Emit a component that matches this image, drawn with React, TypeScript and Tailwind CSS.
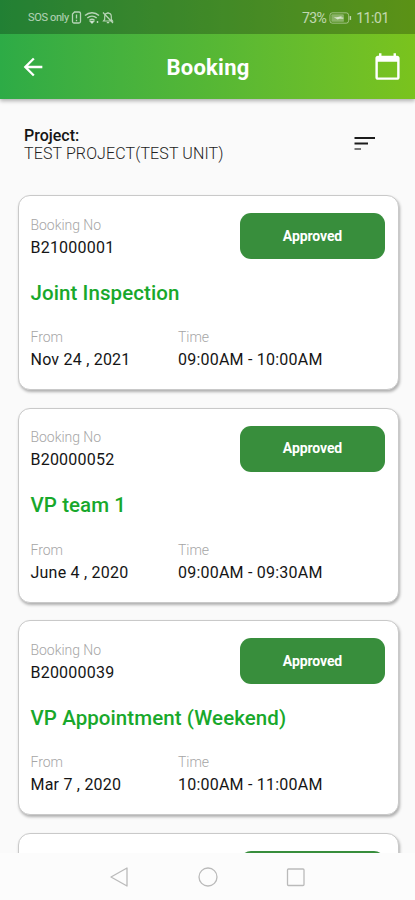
type Booking = {
  id: string;
  title: string;
  date: string;
  time: string;
};

const bookings: Booking[] = [
  { id: "B21000001", title: "Joint Inspection", date: "Nov 24 , 2021", time: "09:00AM - 10:00AM" },
  { id: "B20000052", title: "VP team 1", date: "June 4 , 2020", time: "09:00AM - 09:30AM" },
  { id: "B20000039", title: "VP Appointment (Weekend)", date: "Mar 7 , 2020", time: "10:00AM - 11:00AM" },
];

export default function App() {
  return (
    <div className="flex h-[900px] w-[415px] flex-col overflow-hidden bg-[#fafafa] font-['Roboto',sans-serif] text-[#151515]">
      <header className="relative z-10 shrink-0 bg-linear-to-r from-[#2dab46] via-[#55b735] to-[#7ac31d] text-white shadow-[0_2px_4px_rgba(0,0,0,0.3)]">
        <StatusBar />
        <div className="flex h-[65px] items-center justify-between pr-[13px] pl-[19px]">
          <button type="button" aria-label="Back" className="w-[24px]">
            <svg width="28" height="28" viewBox="0 0 24 24" fill="currentColor">
              <path d="M20 11H7.83l5.59-5.59L12 4l-8 8 8 8 1.41-1.41L7.83 13H20v-2z" />
            </svg>
          </button>
          <h1 className="pt-[2px] text-[22px] leading-none font-bold tracking-[0.25px]">Booking</h1>
          <button type="button" aria-label="Calendar">
            <svg width="29" height="29" viewBox="0 0 24 24" fill="currentColor">
              <path d="M20 3h-1V1h-2v2H7V1H5v2H4c-1.1 0-2 .9-2 2v16c0 1.1.9 2 2 2h16c1.1 0 2-.9 2-2V5c0-1.1-.9-2-2-2zm0 18H4V8h16v13z" />
            </svg>
          </button>
        </div>
      </header>

      <main className="min-h-0 flex-1 overflow-hidden">
        <div className="flex h-[96px] items-start justify-between pt-[27px] pr-[39px] pl-[24px]">
          <div className="text-[16px] leading-[18px]">
            <p className="pt-px font-medium">Project:</p>
            <p className="font-light tracking-[0.12px] text-[#222]">TEST PROJECT(TEST UNIT)</p>
          </div>
          <svg width="22" height="16" viewBox="0 0 22 16" className="mt-[10px]">
            <path d="M0.500 1h20.500v2H0.500z" fill="#1c1c1c" />
            <path d="M0.500 6.500h13.500v2H0.500z" fill="#1c1c1c" />
            <path d="M0.500 12h6.500v2H0.500z" fill="#777" />
          </svg>
        </div>
        <div className="flex flex-col gap-[17.5px] pr-[16px] pl-[18px]">
          {bookings.map((b) => (
            <BookingCard key={b.id} booking={b} />
          ))}
          <article className="h-[195px] shrink-0 rounded-[12px] border border-[#c9c9c9] bg-white pt-[17px] pr-[13px] shadow-[1px_2px_3px_rgba(0,0,0,0.3)]">
            <div className="ml-auto h-[46px] w-[145px] rounded-[11px] bg-[#388e3c]" />
          </article>
        </div>
      </main>

      <NavBar />
    </div>
  );
}

function StatusBar() {
  return (
    <div className="flex h-[34px] items-center justify-between bg-black/25 pr-[26px] pl-[28px] text-white/65">
      <div className="flex items-center gap-[2px]">
        <span className="text-[11px] leading-none tracking-[-0.35px]">SOS only</span>
        <svg width="11" height="13" viewBox="0 0 11 13" fill="none" stroke="currentColor" strokeWidth="1.3">
          <path d="M3.5 1H8a1.5 1.5 0 0 1 1.5 1.5v8A1.5 1.5 0 0 1 8 12H3a1.5 1.5 0 0 1-1.5-1.5V3z" />
          <path d="M5.5 3.5v4M5.5 8.8v1.4" />
        </svg>
        <svg width="16" height="13" viewBox="0 0 16 13" fill="none" stroke="currentColor" strokeWidth="1.4">
          <path d="M1 4.5c4-3.7 10-3.7 14 0M3.3 7c2.8-2.5 6.6-2.5 9.4 0M5.5 9.3c1.5-1.3 3.5-1.3 5 0" />
          <path d="M6.5 10.5h3L8 12z" fill="currentColor" />
          <path d="M13.5 10v2" />
        </svg>
        <svg width="12" height="13" viewBox="0 0 12 13" fill="none" stroke="currentColor" strokeWidth="1.2">
          <path d="M1.5 10h9L9.3 8.3V5.5a3.3 3.3 0 0 0-6.6 0v2.8zM4.8 11.7h2.4M6 1v1.2M1 1.5l10 10.5" />
        </svg>
      </div>
      <div className="flex items-center gap-[3px] pt-px">
        <span className="text-[14px] leading-none tracking-[-0.6px]">73%</span>
        <svg width="23" height="12" viewBox="0 0 24 12">
          <rect x="1" y="0.6" width="19.5" height="10.8" rx="2.5" fill="none" stroke="currentColor" opacity="0.7" />
          <rect x="2.5" y="2" width="13" height="8" rx="1" fill="currentColor" opacity="0.5" />
          <path d="M5 5.2h3l5-1v1.3h2v1.3h-4l-2 .8z" fill="currentColor" />
          <path d="M22.3 4v4" stroke="currentColor" strokeWidth="1.5" />
        </svg>
        <span className="ml-px text-[14px] leading-none tracking-[-0.4px]">11:01</span>
      </div>
    </div>
  );
}

function BookingCard({ booking }: { booking: Booking }) {
  return (
    <article className="h-[195px] shrink-0 rounded-[12px] border border-[#c9c9c9] bg-white pt-[17px] pr-[13px] pl-[11.5px] shadow-[1px_2px_3px_rgba(0,0,0,0.3)]">
      <div className="flex items-start justify-between">
        <Field label="Booking No" value={booking.id} />
        <span className="flex h-[46px] w-[145px] items-center justify-center rounded-[11px] bg-[#388e3c] text-[14px] font-bold tracking-[-0.1px] text-white">
          Approved
        </span>
      </div>
      <h2 className="mt-[21px] text-[20.5px] leading-[24px] font-medium tracking-[0.08px] text-[#18a82b]">
        {booking.title}
      </h2>
      <div className="mt-[21.25px] flex">
        <div className="w-[147.5px]">
          <Field label="From" value={booking.date} />
        </div>
        <Field label="Time" value={booking.time} />
      </div>
    </article>
  );
}

function Field({ label, value }: { label: string; value: string }) {
  return (
    <div className="pt-[1.5px]">
      <p className="text-[14px] leading-[20px] font-light tracking-[-0.05px] text-[#a6a6a6]">{label}</p>
      <p className="text-[16px] leading-[25px] tracking-[0.22px]">{value}</p>
    </div>
  );
}

function NavBar() {
  return (
    <nav className="flex h-[47px] shrink-0 items-center justify-center gap-[68px] bg-[#fcfcfc]">
      <svg width="20" height="20" viewBox="0 0 20 20" fill="none" stroke="#bababa" strokeWidth="1.3">
        <path d="M17 1v18L1 10z" strokeLinejoin="round" />
      </svg>
      <svg width="20" height="20" viewBox="0 0 20 20" fill="none" stroke="#bababa" strokeWidth="1.3">
        <circle cx="10" cy="10" r="9" />
      </svg>
      <svg width="20" height="20" viewBox="0 0 20 20" fill="none" stroke="#bababa" strokeWidth="1.3">
        <rect x="1.5" y="2" width="16.5" height="16.5" rx="1" />
      </svg>
    </nav>
  );
}
